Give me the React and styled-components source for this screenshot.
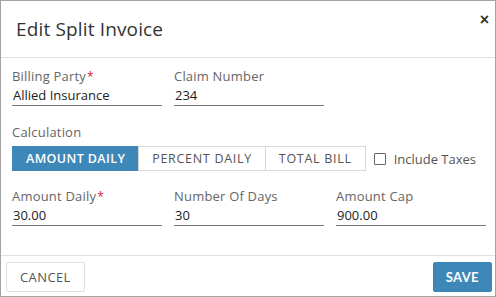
import React, { useState } from 'react'
import styled, { createGlobalStyle } from 'styled-components'

const GlobalStyle = createGlobalStyle`
  body {
    margin: 0;
    padding: 0;
    font-family: "Open Sans", "Liberation Sans", sans-serif;
    background: #fff;
  }
`

const Dialog = styled.div`
  position: relative;
  width: 496px;
  height: 297px;
  box-sizing: border-box;
  border: 1px solid #a3a3a3;
  display: flex;
  flex-direction: column;
  background: #fff;
`

const Header = styled.div`
  height: 57px;
  box-sizing: border-box;
  border-bottom: 1px solid #e2e2e2;
  display: flex;
  align-items: center;
  padding-left: 15px;
`

const Title = styled.h2`
  margin: 0;
  font-size: 19px;
  font-weight: 400;
  letter-spacing: 0.15px;
  color: #333;
`

const Close = styled.button`
  position: absolute;
  top: 10px;
  right: 6px;
  border: 0;
  background: none;
  font-size: 16px;
  font-weight: 700;
  color: #333;
  padding: 0;
  cursor: pointer;
`

const Body = styled.div`
  flex: 1;
  padding: 10px 11px 0;
  display: flex;
  flex-direction: column;
`

const Row = styled.div`
  display: flex;
  gap: 12px;
  margin-top: ${p => p.$top || 0}px;
`

const Field = styled.div`
  width: 150px;
  display: flex;
  flex-direction: column;
`

const Label = styled.label`
  font-size: 13px;
  line-height: 17px;
  letter-spacing: 0.2px;
  color: #666;
`

const Req = styled.span`
  color: #e0143c;
  vertical-align: top;
  font-size: 12px;
  margin-left: 1px;
`

const Input = styled.input`
  border: 0;
  border-bottom: 1px solid #777;
  height: 20px;
  padding: 0 1px;
  font-family: inherit;
  font-size: 13px;
  color: #222;
  outline: none;
  background: transparent;
`

const Group = styled.div`
  display: flex;
  margin-top: 5px;
  align-items: center;
`

const SegButton = styled.button`
  height: 25px;
  box-sizing: border-box;
  padding: 0 13px;
  border: 1px solid ${p => p.$active ? '#3d88b9' : '#d8d8d8'};
  margin-left: -1px;
  background: ${p => p.$active ? '#3d88b9' : '#fff'};
  color: ${p => p.$active ? '#fff' : '#555'};
  font-family: inherit;
  font-size: 12.5px;
  font-weight: ${p => p.$active ? 600 : 400};
  letter-spacing: ${p => p.$active ? 0.4 : 0.7}px;
  cursor: pointer;
  &:first-child { margin-left: 0; }
`

const Check = styled.label`
  display: flex;
  align-items: center;
  margin-left: 8px;
  font-size: 13px;
  color: #555;
  gap: 8px;
`

const Box = styled.span`
  width: 10px;
  height: 10px;
  border: 1px solid #666;
  border-radius: 1px;
`

const Footer = styled.div`
  height: 41px;
  box-sizing: border-box;
  border-top: 1px solid #e2e2e2;
  display: flex;
  justify-content: space-between;
  align-items: flex-start;
  padding: 6px 3px 0 5px;
`

const Button = styled.button`
  height: 30px;
  box-sizing: border-box;
  padding: 0 ${p => p.$primary ? 12 : 13}px;
  border: 1px solid ${p => p.$primary ? '#3a84b3' : '#e0e0e0'};
  border-radius: 2px;
  background: ${p => p.$primary ? '#3d88b9' : '#fff'};
  color: ${p => p.$primary ? '#fff' : '#555'};
  font-family: ${p => p.$primary ? '"Lato", sans-serif' : 'inherit'};
  font-weight: ${p => p.$primary ? 700 : 400};
  font-size: 13px;
  letter-spacing: 0.4px;
  cursor: pointer;
`

export default function App() {
  const [mode, setMode] = useState('amount')

  return (
    <>
      <GlobalStyle />
      <Dialog>
        <Header>
          <Title>Edit Split Invoice</Title>
        </Header>
        <Close>×</Close>
        <Body>
          <Row>
            <Field>
              <Label>Billing Party<Req>*</Req></Label>
              <Input defaultValue="Allied Insurance" />
            </Field>
            <Field>
              <Label>Claim Number</Label>
              <Input defaultValue="234" />
            </Field>
          </Row>
          <Row $top={18}>
            <Label>Calculation</Label>
          </Row>
          <Group>
            <SegButton $active={mode === 'amount'} onClick={() => setMode('amount')}>AMOUNT DAILY</SegButton>
            <SegButton $active={mode === 'percent'} onClick={() => setMode('percent')}>PERCENT DAILY</SegButton>
            <SegButton $active={mode === 'total'} onClick={() => setMode('total')}>TOTAL BILL</SegButton>
            <Check><Box />Include Taxes</Check>
          </Group>
          <Row $top={17}>
            <Field>
              <Label>Amount Daily<Req>*</Req></Label>
              <Input defaultValue="30.00" />
            </Field>
            <Field>
              <Label>Number Of Days</Label>
              <Input defaultValue="30" />
            </Field>
            <Field>
              <Label>Amount Cap</Label>
              <Input defaultValue="900.00" />
            </Field>
          </Row>
        </Body>
        <Footer>
          <Button>CANCEL</Button>
          <Button $primary>SAVE</Button>
        </Footer>
      </Dialog>
    </>
  )
}
